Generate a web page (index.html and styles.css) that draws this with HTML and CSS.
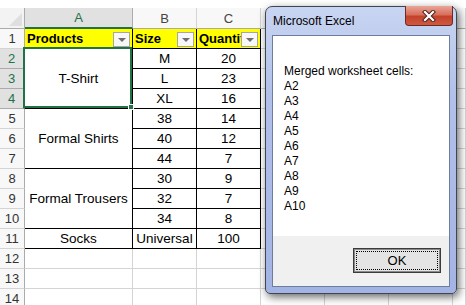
FILE: index.html
```html
<!DOCTYPE html>
<html lang="en">
<head>
    <meta charset="UTF-8">
    <title>Merged cells</title>
    <link rel="stylesheet" href="styles.css">
</head>
<body>
    <div class="sheet">
        <!-- column headers -->
        <div class="corner"><span class="corner-tri"></span></div>
        <div class="colhead sel">A</div>
        <div class="colhead">B</div>
        <div class="colhead">C</div>
        <div class="colhead rest"></div>

        <!-- row 1 -->
        <div class="rowhead">1</div>
        <div class="c d th">Products<span class="filter"></span></div>
        <div class="c d th">Size<span class="filter"></span></div>
        <div class="c d th">Quantity<span class="filter"></span></div>
        <div class="c rest"></div>

        <!-- rows 2-4 -->
        <div class="rowhead sel">2</div>
        <div class="c d merged">T-Shirt<span class="selection"><span class="handle"></span></span></div>
        <div class="c d">M</div>
        <div class="c d">20</div>
        <div class="c rest"></div>

        <div class="rowhead sel">3</div>
        <div class="c d">L</div>
        <div class="c d">23</div>
        <div class="c rest"></div>

        <div class="rowhead sel">4</div>
        <div class="c d">XL</div>
        <div class="c d">16</div>
        <div class="c rest"></div>

        <!-- rows 5-7 -->
        <div class="rowhead">5</div>
        <div class="c d merged">Formal Shirts</div>
        <div class="c d">38</div>
        <div class="c d">14</div>
        <div class="c rest"></div>

        <div class="rowhead">6</div>
        <div class="c d">40</div>
        <div class="c d">12</div>
        <div class="c rest"></div>

        <div class="rowhead">7</div>
        <div class="c d">44</div>
        <div class="c d">7</div>
        <div class="c rest"></div>

        <!-- rows 8-10 -->
        <div class="rowhead">8</div>
        <div class="c d merged">Formal Trousers</div>
        <div class="c d">30</div>
        <div class="c d">9</div>
        <div class="c rest"></div>

        <div class="rowhead">9</div>
        <div class="c d">32</div>
        <div class="c d">7</div>
        <div class="c rest"></div>

        <div class="rowhead">10</div>
        <div class="c d">34</div>
        <div class="c d">8</div>
        <div class="c rest"></div>

        <!-- row 11 -->
        <div class="rowhead">11</div>
        <div class="c d">Socks</div>
        <div class="c d">Universal</div>
        <div class="c d">100</div>
        <div class="c rest"></div>

        <!-- empty rows -->
        <div class="rowhead">12</div>
        <div class="c"></div><div class="c"></div><div class="c"></div><div class="c rest"></div>
        <div class="rowhead">13</div>
        <div class="c"></div><div class="c"></div><div class="c"></div><div class="c rest"></div>
        <div class="rowhead">14</div>
        <div class="c"></div><div class="c"></div><div class="c"></div><div class="c rest"></div>
    </div>

    <!-- message box -->
    <div class="dialog">
        <div class="titlebar">
            <span class="title">Microsoft Excel</span>
            <span class="close-btn">
                <svg width="14" height="12" viewBox="0 0 14 12">
                    <path d="M3 2 L11 10 M11 2 L3 10" stroke="#4a2520" stroke-width="4.2" stroke-linecap="square"/>
                    <path d="M3 2 L11 10 M11 2 L3 10" stroke="#ffffff" stroke-width="2.2" stroke-linecap="square"/>
                </svg>
            </span>
        </div>
        <div class="client">
            <div class="message">
                Merged worksheet cells:<br>
                A2<br>
                A3<br>
                A4<br>
                A5<br>
                A6<br>
                A7<br>
                A8<br>
                A9<br>
                A10
            </div>
            <div class="footer">
                <button class="ok-btn"><span class="focus">OK</span></button>
            </div>
        </div>
    </div>
</body>
</html>
```

FILE: styles.css
```css
* {
    margin: 0;
    padding: 0;
    box-sizing: border-box;
}

html,
body {
    width: 100%;
    height: 100%;
    overflow: hidden;
    background: #fff;
}

body {
    font-family: "Liberation Sans", Arial, sans-serif;
    position: relative;
}

/* spreadsheet grid */
.sheet {
    display: grid;
    grid-template-columns: 25px 108px 64px 64px 1fr;
    grid-template-rows: 21px;
    grid-auto-rows: 20px;
    margin-top: 8px;
    font-size: 13.5px;
    color: #000;
}

.corner {
    position: relative;
    background: #f3f3f3;
    border-right: 1px solid #ababab;
    border-bottom: 1px solid #ababab;
}

.corner-tri {
    position: absolute;
    right: 2px;
    bottom: 2px;
    width: 0;
    height: 0;
    border-left: 13px solid transparent;
    border-bottom: 13px solid #dfdfdf;
}

.colhead {
    display: flex;
    align-items: center;
    justify-content: center;
    background: #f8f8f8;
    color: #444;
    font-size: 13px;
    border-right: 1px solid #d4d4d4;
    border-bottom: 1px solid #ababab;
}

.colhead.sel {
    background: #e1e1e1;
    color: #217346;
    border-bottom: 2px solid #217346;
    border-right-color: #ababab;
}

.colhead.rest {
    background: #f8f8f8 repeating-linear-gradient(to right, transparent 0 63px, #d4d4d4 63px 64px);
}

.rowhead {
    display: flex;
    align-items: center;
    justify-content: center;
    background: #f8f8f8;
    color: #333;
    font-size: 13px;
    border-right: 1px solid #ababab;
    border-bottom: 1px solid #d4d4d4;
}

.rowhead.sel {
    background: #e1e1e1;
    color: #217346;
    border-right: 2px solid #217346;
    border-bottom-color: #ababab;
}

.c {
    position: relative;
    display: flex;
    align-items: center;
    justify-content: center;
    white-space: nowrap;
    overflow: visible;
    border-right: 1px solid #d4d4d4;
    border-bottom: 1px solid #d4d4d4;
}

.c.rest {
    background: repeating-linear-gradient(to right, transparent 0 63px, #d4d4d4 63px 64px);
}

.c.d {
    border-right-color: #000;
    border-bottom-color: #000;
}

.c.th {
    justify-content: flex-start;
    padding-left: 2px;
    background: #ffff00;
    font-weight: bold;
    font-size: 13px;
    overflow: hidden;
}

.merged {
    grid-row: span 3;
}

/* autofilter dropdown */
.filter {
    position: absolute;
    right: 2px;
    top: 3px;
    width: 17px;
    height: 15px;
    background: #f7f7f7;
    border: 1px solid #a6a6a6;
}

.filter::after {
    content: "";
    position: absolute;
    left: 4px;
    top: 5px;
    border-left: 4px solid transparent;
    border-right: 4px solid transparent;
    border-top: 4px solid #6f6f6f;
}

/* selected range */
.selection {
    position: absolute;
    top: -2px;
    left: -2px;
    right: 0;
    bottom: 0;
    border: 2px solid #217346;
    z-index: 2;
}

.handle {
    position: absolute;
    right: -4px;
    bottom: -4px;
    width: 6px;
    height: 6px;
    background: #217346;
    border: 1px solid #fff;
}

/* message box */
.dialog {
    position: absolute;
    left: 265px;
    top: 6px;
    width: 192px;
    height: 288px;
    display: flex;
    flex-direction: column;
    padding: 0 6px 6px 6px;
    border: 1px solid #404552;
    border-radius: 7px 7px 5px 5px;
    background: linear-gradient(#c8d5f2, #b2c1ea 30%, #a3b3e4);
    box-shadow: 2px 3px 9px rgba(0, 0, 0, 0.6);
    font-family: "Liberation Sans", Arial, sans-serif;
    font-size: 12px;
    z-index: 10;
}

.titlebar {
    position: relative;
    height: 28px;
    display: flex;
    align-items: center;
    padding-left: 1px;
    padding-bottom: 1px;
}

.title {
    color: #000;
    font-size: 12px;
}

.close-btn {
    position: absolute;
    top: -1px;
    right: -3px;
    width: 48px;
    height: 20px;
    display: flex;
    align-items: center;
    justify-content: center;
    border: 1px solid #6b2a22;
    border-top: none;
    border-radius: 0 0 4px 4px;
    background: linear-gradient(#e9a697, #d8705d 45%, #c4412c 55%, #cf5a40);
}

.client {
    flex: 1;
    display: flex;
    flex-direction: column;
    border: 1px solid #6f7c9c;
    background: #fff;
}

.message {
    flex: 1;
    padding: 28px 0 0 11px;
    line-height: 15px;
    color: #000;
}

.footer {
    height: 50px;
    background: #f0f0f0;
    display: flex;
    justify-content: flex-end;
    padding: 12px 8px 0 0;
}

.ok-btn {
    width: 88px;
    height: 25px;
    padding: 2px;
    border: 1px solid #3b3b3b;
    box-shadow: inset 0 0 0 1px #8a8a8a;
    background: #e4e4e4;
    font-family: "Liberation Sans", Arial, sans-serif;
    font-size: 13px;
    color: #000;
}

.ok-btn .focus {
    display: flex;
    align-items: center;
    justify-content: center;
    height: 100%;
    border: 1px dotted #000;
}
```
